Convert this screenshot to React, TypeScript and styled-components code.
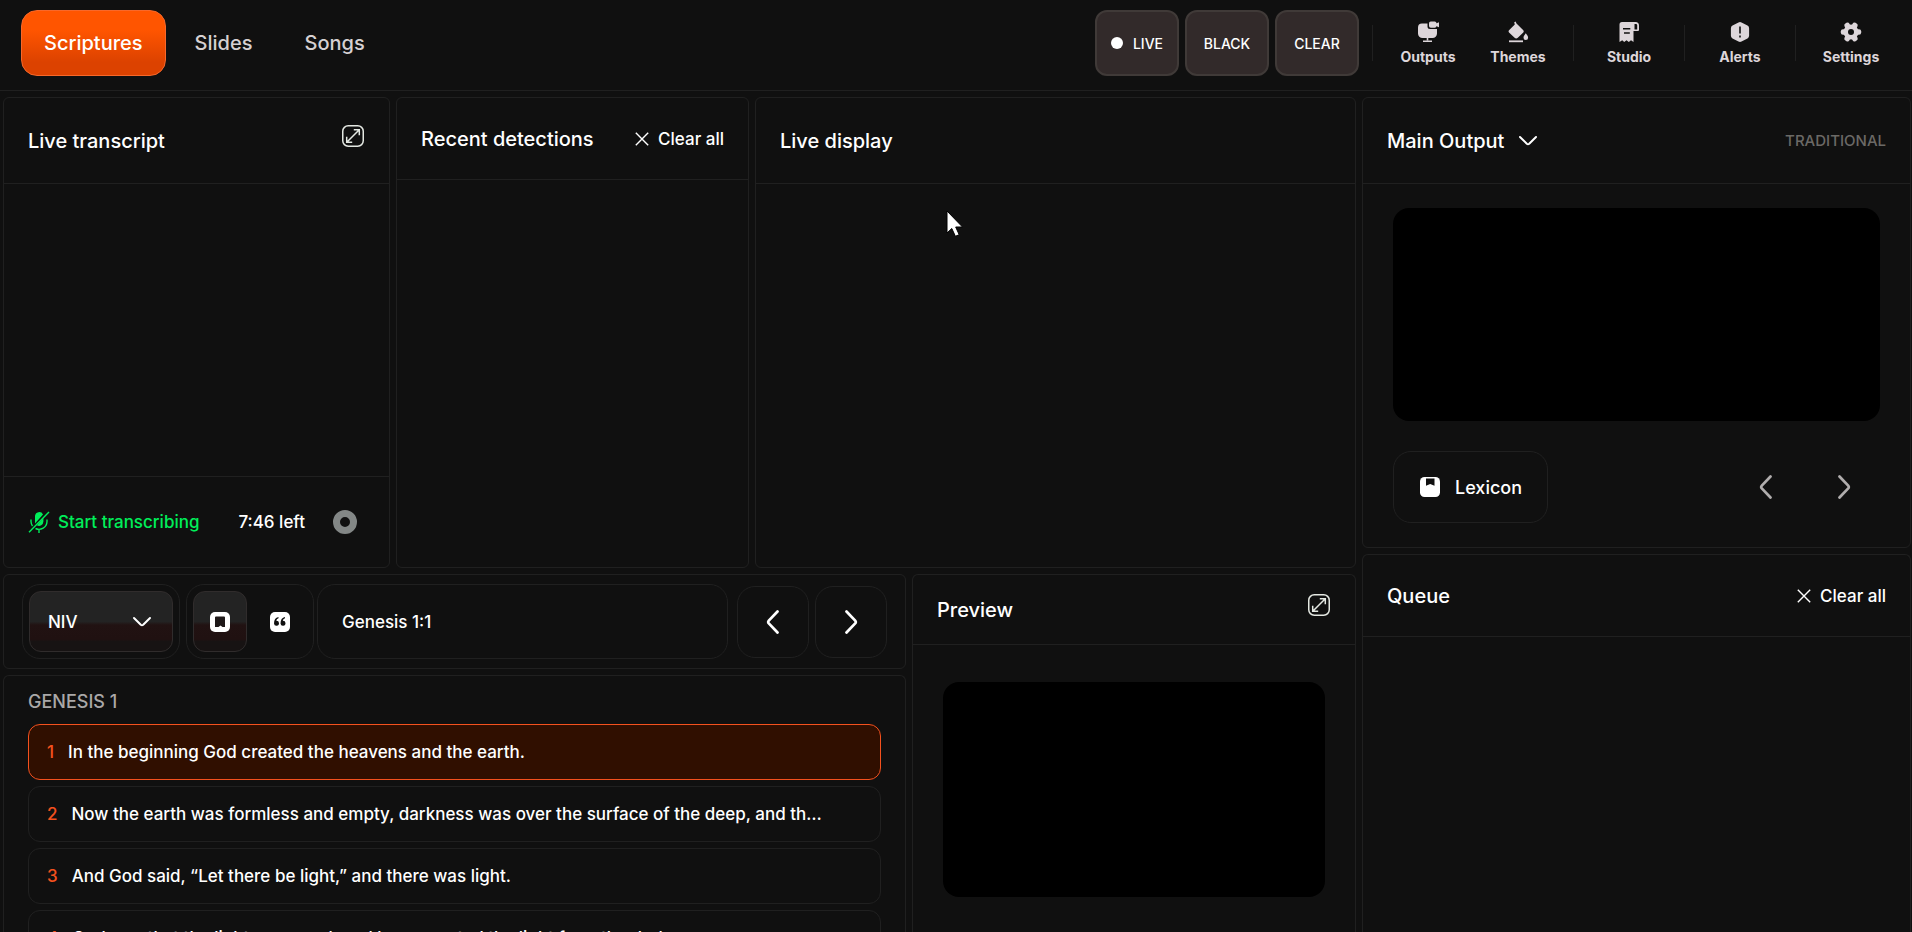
import React from "react";
import styled, { createGlobalStyle, css } from "styled-components";

const line = "#202020";

const GlobalStyle = createGlobalStyle`
  *, *::before, *::after { box-sizing: border-box; }
  body {
    margin: 0;
    background: #101010;
    color: #ffffff;
    font-family: Inter, "Liberation Sans", sans-serif;
    font-size: 17px;
    font-weight: 500;
  }
  button, input, select { font: inherit; color: inherit; }
  button { cursor: pointer; }
  h1, h2, h3, p, ol { margin: 0; padding: 0; }
`;

/* ---------- Shell ---------- */

const Shell = styled.div`
  height: 100vh;
  display: flex;
  flex-direction: column;
  overflow: hidden;
  position: relative;
`;

const TopBar = styled.header`
  flex: none;
  display: flex;
  justify-content: space-between;
  align-items: flex-start;
  height: 91px;
  padding: 10px 16px 0 21px;
  border-bottom: 1px solid ${line};
`;

const Tabs = styled.nav`
  display: flex;
  gap: 6px;
`;

const Tab = styled.button<{ $active?: boolean }>`
  height: 66px;
  padding: 0 22px;
  border: 1px solid transparent;
  border-radius: 16px;
  background: none;
  color: #d6d0d2;
  font-size: 20px;
  ${(p) =>
    p.$active &&
    css`
      color: #ffffff;
      border-color: #f8682a;
      background: linear-gradient(#ff5500 30%, #dc4200 80%);
    `}
`;

const Tools = styled.div`
  display: flex;
  align-items: center;
`;

const StateButtons = styled.div`
  display: flex;
  gap: 6px;
  margin-right: 13px;
`;

const StateButton = styled.button`
  display: flex;
  align-items: center;
  justify-content: center;
  gap: 10px;
  width: 84px;
  height: 66px;
  padding: 0;
  border: 2px solid #403a38;
  border-radius: 12px;
  background: #322a2a;
  font-size: 14px;
`;

const Dot = styled.span`
  width: 12px;
  height: 12px;
  border-radius: 50%;
  background: #ffffff;
`;

const ToolGroup = styled.div`
  display: flex;
  align-items: center;
  padding-right: 10px;
  &:last-child { padding-right: 0; }
  &::before {
    content: "";
    width: 1px;
    height: 36px;
    margin-right: 10px;
    background: ${line};
  }
`;

const ToolButton = styled.button`
  display: flex;
  flex-direction: column;
  align-items: center;
  gap: 4px;
  width: 90px;
  padding: 2px 0 0;
  border: 0;
  background: none;
  color: #ddd6da;
  font-size: 14px;
  font-weight: 700;
  line-height: 20px;
`;

/* ---------- Panels ---------- */

const Workspace = styled.main`
  flex: 1;
  min-height: 0;
  display: grid;
  grid-template-columns: minmax(0, 1353fr) minmax(0, 549fr);
  gap: 6px;
  padding: 6px 1px 0 3px;
`;

const LeftArea = styled.div`
  min-height: 0;
  display: grid;
  grid-template-rows: minmax(0, 471fr) minmax(0, 358fr);
  gap: 6px;
`;

const LiveRow = styled.div`
  min-height: 0;
  display: grid;
  grid-template-columns: minmax(0, 387fr) minmax(0, 353fr) minmax(0, 601fr);
  gap: 6px;
`;

const LowerRow = styled.div`
  min-height: 0;
  display: grid;
  grid-template-columns: minmax(0, 903fr) minmax(0, 444fr);
  gap: 6px;
`;

const Column = styled.div`
  min-height: 0;
  display: flex;
  flex-direction: column;
  gap: 6px;
`;

const Panel = styled.section<{ $fill?: boolean; $open?: boolean }>`
  display: flex;
  flex-direction: column;
  flex: ${(p) => (p.$fill ? "1" : "none")};
  min-height: 0;
  border: 1px solid ${line};
  border-radius: 6px;
  overflow: hidden;
  ${(p) =>
    p.$open &&
    css`
      border-bottom: 0;
      border-bottom-left-radius: 0;
      border-bottom-right-radius: 0;
    `}
`;

const headHeights = { tall: 86, medium: 82, short: 70 };

const PanelHead = styled.header<{ $size: keyof typeof headHeights }>`
  flex: none;
  display: flex;
  align-items: center;
  justify-content: space-between;
  height: ${(p) => headHeights[p.$size]}px;
  padding: 0 24px;
  border-bottom: 1px solid ${line};
`;

const Title = styled.h2`
  font-size: 20px;
  font-weight: 500;
  line-height: 24px;
`;

const PlainButton = styled.button`
  display: flex;
  align-items: center;
  gap: 8px;
  padding: 0;
  border: 0;
  background: none;
`;

const ExpandButton = styled(PlainButton)`
  padding: 0 0 10px;
`;

const OutputPicker = styled(PlainButton)`
  gap: 14px;
  font-size: 20px;
`;

const ModeLabel = styled.span`
  color: #6b6966;
  font-size: 15px;
`;

/* ---------- Transcript ---------- */

const PanelSpace = styled.div`
  flex: 1;
`;

const TranscriptFoot = styled.footer`
  display: flex;
  align-items: center;
  height: 91px;
  padding: 0 24px;
  border-top: 1px solid ${line};
`;

const StartButton = styled(PlainButton)`
  color: #00ee5a;
`;

const TimeLeft = styled.span`
  margin: 0 28px 0 auto;
`;

const StopButton = styled.button`
  width: 24px;
  height: 24px;
  margin-right: 8px;
  padding: 0;
  border: 7px solid #838786;
  border-radius: 50%;
  background: #101010;
`;

/* ---------- Output and preview ---------- */

const Screen = styled.div<{ $wide?: boolean }>`
  background: #000000;
  border-radius: 16px;
  ${(p) => (p.$wide ? "height: 213px;" : "aspect-ratio: 16 / 9;")}
`;

const OutputBody = styled.div`
  display: flex;
  flex-direction: column;
  gap: 30px;
  padding: 24px 30px;
`;

const PreviewBody = styled.div`
  padding: 37px 30px 0;
`;

const OutputControls = styled.div`
  display: flex;
  align-items: center;
  gap: 6px;
`;

const LexiconButton = styled.button`
  display: flex;
  align-items: center;
  gap: 14px;
  height: 72px;
  margin-right: auto;
  padding: 0 25px;
  border: 1px solid ${line};
  border-radius: 18px;
  background: none;
  font-size: 18px;
`;

const StepButton = styled.button<{ $outlined?: boolean }>`
  flex: none;
  display: flex;
  align-items: center;
  justify-content: center;
  width: 72px;
  height: 72px;
  padding: 0;
  border: 1px solid ${(p) => (p.$outlined ? line : "transparent")};
  border-radius: 18px;
  background: none;
  color: ${(p) => (p.$outlined ? "#ffffff" : "#b0adad")};
`;

/* ---------- Scripture toolbar ---------- */

const ScriptureBar = styled.div`
  display: flex;
  align-items: center;
  height: 93px;
  padding: 0 18px;
`;

const raised = css`
  border: 1px solid #302c2c;
  border-radius: 12px;
  background: linear-gradient(#232323 50%, #211212 56%, #201111 80%, #171313 84%);
`;

const Well = styled.div`
  flex: none;
  display: flex;
  gap: 6px;
  height: 75px;
  margin-right: 6px;
  padding: 6px;
  border: 1px solid ${line};
  border-radius: 18px;
`;

const ToggleWell = styled(Well)`
  margin-right: 3px;
`;

const VersionField = styled.label`
  position: relative;
  display: flex;
  align-items: center;
  width: 144px;
  ${raised}
  svg {
    position: absolute;
    right: 20px;
    pointer-events: none;
  }
`;

const VersionSelect = styled.select`
  appearance: none;
  width: 100%;
  height: 100%;
  padding: 0 48px 0 18px;
  border: 0;
  outline: 0;
  background: none;
`;

const ViewButton = styled.button<{ $active?: boolean }>`
  display: flex;
  align-items: center;
  justify-content: center;
  width: 54px;
  padding: 0;
  border: 1px solid transparent;
  background: none;
  ${(p) => p.$active && raised}
`;

const ReferenceInput = styled.input`
  flex: 1;
  min-width: 0;
  height: 75px;
  margin-right: 9px;
  padding: 0 24px;
  border: 1px solid ${line};
  border-radius: 18px;
  outline: 0;
  background: none;
`;

const StepPair = styled.div`
  display: flex;
  gap: 6px;
`;

/* ---------- Verses ---------- */

const Chapter = styled.h3`
  padding: 14px 24px 10px;
  color: #aaa8a8;
  font-size: 18px;
  font-weight: 500;
  line-height: 24px;
`;

const VerseList = styled.ol`
  display: flex;
  flex-direction: column;
  gap: 6px;
  padding: 0 24px;
  list-style: none;
`;

const Verse = styled.button<{ $active?: boolean }>`
  display: flex;
  align-items: center;
  gap: 14px;
  width: 100%;
  height: 56px;
  padding: 0 54px 0 18px;
  border: 1px solid ${(p) => (p.$active ? "#f4511e" : line)};
  border-radius: 12px;
  background: ${(p) => (p.$active ? "#300f00" : "none")};
  text-align: left;
`;

const VerseNumber = styled.span`
  color: #f4511e;
`;

const VerseText = styled.span`
  min-width: 0;
  overflow: hidden;
  text-overflow: ellipsis;
  white-space: nowrap;
  line-height: 22px;
`;

const Pointer = styled.svg`
  position: absolute;
  left: 946px;
  top: 210px;
  pointer-events: none;
`;

/* ---------- Icons ---------- */

const OutputsIcon = () => (
  <svg width="22" height="22" viewBox="0 0 22 22" fill="currentColor" aria-hidden="true">
    <path d="M5 2.500h5.500v3A2.500 2.500 0 0 0 13 8h7v4.500A4.500 4.500 0 0 1 15.500 17H5.500A4.500 4.500 0 0 1 1 12.500V6.500a4 4 0 0 1 4-4z" />
    <rect x="12" y="0.500" width="7.500" height="6.200" rx="1.800" />
    <path d="M19 2.500L22 1.200v5L19 5z" />
    <path d="M9.700 17h1.600v2.600H9.700z" />
    <path d="M6 19.500h9V21H6z" />
  </svg>
);

const ThemesIcon = () => (
  <svg width="22" height="22" viewBox="0 0 22 22" fill="currentColor" aria-hidden="true">
    <path d="M7.200 1.200L8.600 0.600L9.500 2.500L16.300 9.300a1.500 1.500 0 0 1 0 2.100L10.800 16.700a2.300 2.300 0 0 1-3.200 0L2 11.400a1.600 1.600 0 0 1 0-2.200L7.800 3.400z" />
    <path d="M18.800 12.300c1.200 1.600 2.300 3 2.300 4.400a2.300 2.300 0 0 1-4.600 0c0-1.400 1.100-2.800 2.300-4.400z" />
    <path d="M2 19.400h14v1.800H2z" />
  </svg>
);

const StudioIcon = () => (
  <svg width="22" height="22" viewBox="0 0 22 22" aria-hidden="true">
    <path
      fill="currentColor"
      fillRule="evenodd"
      d="M4 1h13.500A3.500 3.500 0 0 1 21 4.500V9a1 1 0 0 1-1 1h-4.500v11l-2.500-1.700L10.800 21 8.500 19.300 6.200 21 4.200 19.300 1.500 21V3.500A2.500 2.500 0 0 1 4 1zM16.500 3v5.500h2.700V4.300A1.300 1.300 0 0 0 17.900 3zM5 7v1.600h7.300V7zm1 4.200v1.600h5.800v-1.600z"
    />
  </svg>
);

const AlertsIcon = () => (
  <svg width="22" height="22" viewBox="0 0 22 22" aria-hidden="true">
    <path
      fill="currentColor"
      d="M9.500 1.400a3 3 0 0 1 3 0l6 3.200a3 3 0 0 1 1.600 2.600v7.600a3 3 0 0 1-1.600 2.600l-6 3.200a3 3 0 0 1-3 0l-6-3.200A3 3 0 0 1 1.900 14.800V7.200a3 3 0 0 1 1.600-2.600z"
    />
    <path d="M11 5.500v7M11 14.500v2" stroke="#101010" strokeWidth="1.600" />
  </svg>
);

const SettingsIcon = () => (
  <svg width="22" height="22" viewBox="0 0 22 22" aria-hidden="true">
    <g fill="currentColor">
      <circle cx="11" cy="11" r="7.500" />
      {[30, 90, 150].map((a) => (
        <rect key={a} x="8.200" y="0.800" width="5.600" height="20.400" rx="2.200" transform={`rotate(${a} 11 11)`} />
      ))}
    </g>
    <circle cx="11" cy="11" r="3" fill="#101010" />
  </svg>
);

const ExpandIcon = () => (
  <svg width="24" height="24" viewBox="0 0 24 24" fill="none" stroke="#e4e8e2" strokeWidth="1.500" aria-hidden="true">
    <rect x="1.750" y="1.750" width="20.500" height="20.500" rx="5.500" />
    <path d="M6 18L18 6M12.800 5.700h5.500v5.500M5.700 12.800v5.500h5.500" />
  </svg>
);

const CloseIcon = () => (
  <svg width="16" height="16" viewBox="0 0 16 16" stroke="currentColor" strokeWidth="1.400" aria-hidden="true">
    <path d="M1.800 1.800l12.400 12.400M14.200 1.800L1.800 14.200" />
  </svg>
);

const ChevronDown = () => (
  <svg width="20" height="12" viewBox="0 0 20 12" fill="none" stroke="currentColor" strokeWidth="2" strokeLinecap="round" strokeLinejoin="round" aria-hidden="true">
    <path d="M2 2l6.800 6.700q1.200 1 2.400 0L18 2" />
  </svg>
);

const ChevronSide = ({ right }: { right?: boolean }) => (
  <svg width="14" height="26" viewBox="0 0 14 26" fill="none" stroke="currentColor" strokeWidth="2.700" strokeLinecap="round" aria-hidden="true">
    <path d={right ? "M2.500 2.500l8.700 9.100q1.200 1.400 0 2.800l-8.700 9.100" : "M11.500 2.500l-8.700 9.100q-1.200 1.400 0 2.800l8.700 9.100"} />
  </svg>
);

const MicOffIcon = () => (
  <svg width="22" height="22" viewBox="0 0 22 22" fill="none" stroke="currentColor" strokeWidth="1.400" aria-hidden="true">
    <path fill="currentColor" stroke="none" d="M7 5a4.200 4.200 0 0 1 8-1.500L7 12.500zM15.400 7v3.500a4.400 4.400 0 0 1-6.500 3.800z" />
    <path d="M3 8.500v2a8 8 0 0 0 1.500 4.500M19 8.500v2a8 8 0 0 1-11.500 7M11 18.500V22" />
    <path d="M1 21.300L21 1" />
  </svg>
);

const LexiconIcon = () => (
  <svg width="22" height="22" viewBox="0 0 22 22" aria-hidden="true">
    <rect x="1" y="1" width="20" height="20" rx="4.500" fill="#ffffff" />
    <path d="M7 2.500h8.500v7.200L11.200 8 7 9.700z" fill="#101010" />
  </svg>
);

const VerseViewIcon = () => (
  <svg width="22" height="22" viewBox="0 0 22 22" aria-hidden="true">
    <rect x="1" y="1" width="20" height="20" rx="5" fill="#ffffff" />
    <path d="M7 5.500h8a1 1 0 0 1 1 1V16h-2.500l-2-1.500L9.500 16H6V6.500a1 1 0 0 1 1-1z" fill="#1e1818" />
  </svg>
);

const QuoteIcon = () => (
  <svg width="22" height="22" viewBox="0 0 22 22" aria-hidden="true">
    <rect x="1" y="1" width="20" height="20" rx="5" fill="#ffffff" />
    <g fill="#101010">
      <path d="M9.500 6C6.500 6.600 5 8.600 5 12.500a2.500 2.500 0 1 0 2.300-2.700c.2-1.200.9-2 2.200-2.500z" />
      <path d="M16 6c-3 .6-4.500 2.600-4.500 6.500a2.500 2.500 0 1 0 2.300-2.700c.2-1.200.9-2 2.200-2.500z" />
    </g>
  </svg>
);

/* ---------- Data ---------- */

const toolGroups = [
  [
    { label: "Outputs", Icon: OutputsIcon },
    { label: "Themes", Icon: ThemesIcon },
  ],
  [{ label: "Studio", Icon: StudioIcon }],
  [{ label: "Alerts", Icon: AlertsIcon }],
  [{ label: "Settings", Icon: SettingsIcon }],
];

const verses = [
  "In the beginning God created the heavens and the earth.",
  "Now the earth was formless and empty, darkness was over the surface of the deep, and the Spirit of God was hovering over the waters.",
  "And God said, “Let there be light,” and there was light.",
  "God saw that the light was good, and he separated the light from the darkness.",
];

const ClearAll = () => (
  <PlainButton type="button">
    <CloseIcon />
    Clear all
  </PlainButton>
);

export default function App() {
  return (
    <Shell>
      <GlobalStyle />
      <TopBar>
        <Tabs>
          <Tab type="button" $active>Scriptures</Tab>
          <Tab type="button">Slides</Tab>
          <Tab type="button">Songs</Tab>
        </Tabs>
        <Tools>
          <StateButtons>
            <StateButton type="button"><Dot />LIVE</StateButton>
            <StateButton type="button">BLACK</StateButton>
            <StateButton type="button">CLEAR</StateButton>
          </StateButtons>
          {toolGroups.map((group) => (
            <ToolGroup key={group[0].label}>
              {group.map(({ label, Icon }) => (
                <ToolButton type="button" key={label}>
                  <Icon />
                  {label}
                </ToolButton>
              ))}
            </ToolGroup>
          ))}
        </Tools>
      </TopBar>

      <Workspace>
        <LeftArea>
          <LiveRow>
            <Panel>
              <PanelHead $size="tall">
                <Title>Live transcript</Title>
                <ExpandButton type="button" aria-label="Expand transcript"><ExpandIcon /></ExpandButton>
              </PanelHead>
              <PanelSpace />
              <TranscriptFoot>
                <StartButton type="button"><MicOffIcon />Start transcribing</StartButton>
                <TimeLeft>7:46 left</TimeLeft>
                <StopButton type="button" aria-label="Stop" />
              </TranscriptFoot>
            </Panel>
            <Panel>
              <PanelHead $size="medium">
                <Title>Recent detections</Title>
                <ClearAll />
              </PanelHead>
            </Panel>
            <Panel>
              <PanelHead $size="tall">
                <Title>Live display</Title>
              </PanelHead>
            </Panel>
          </LiveRow>

          <LowerRow>
            <Column>
              <Panel>
                <ScriptureBar>
                  <Well>
                    <VersionField>
                      <VersionSelect aria-label="Bible version" defaultValue="NIV">
                        <option>NIV</option>
                      </VersionSelect>
                      <ChevronDown />
                    </VersionField>
                  </Well>
                  <ToggleWell>
                    <ViewButton type="button" $active aria-label="Reference view"><VerseViewIcon /></ViewButton>
                    <ViewButton type="button" aria-label="Quote search"><QuoteIcon /></ViewButton>
                  </ToggleWell>
                  <ReferenceInput aria-label="Reference" defaultValue="Genesis 1:1" />
                  <StepPair>
                    <StepButton type="button" $outlined aria-label="Previous verse"><ChevronSide /></StepButton>
                    <StepButton type="button" $outlined aria-label="Next verse"><ChevronSide right /></StepButton>
                  </StepPair>
                </ScriptureBar>
              </Panel>
              <Panel $fill $open>
                <Chapter>GENESIS 1</Chapter>
                <VerseList>
                  {verses.map((text, i) => (
                    <li key={text}>
                      <Verse type="button" $active={i === 0}>
                        <VerseNumber>{i + 1}</VerseNumber>
                        <VerseText>{text}</VerseText>
                      </Verse>
                    </li>
                  ))}
                </VerseList>
              </Panel>
            </Column>
            <Panel $open>
              <PanelHead $size="short">
                <Title>Preview</Title>
                <ExpandButton type="button" aria-label="Expand preview"><ExpandIcon /></ExpandButton>
              </PanelHead>
              <PreviewBody>
                <Screen />
              </PreviewBody>
            </Panel>
          </LowerRow>
        </LeftArea>

        <Column>
          <Panel>
            <PanelHead $size="tall">
              <OutputPicker type="button">Main Output<ChevronDown /></OutputPicker>
              <ModeLabel>TRADITIONAL</ModeLabel>
            </PanelHead>
            <OutputBody>
              <Screen $wide />
              <OutputControls>
                <LexiconButton type="button"><LexiconIcon />Lexicon</LexiconButton>
                <StepButton type="button" aria-label="Previous"><ChevronSide /></StepButton>
                <StepButton type="button" aria-label="Next"><ChevronSide right /></StepButton>
              </OutputControls>
            </OutputBody>
          </Panel>
          <Panel $fill $open>
            <PanelHead $size="medium">
              <Title>Queue</Title>
              <ClearAll />
            </PanelHead>
          </Panel>
        </Column>
      </Workspace>

      <Pointer width="20" height="28" viewBox="0 0 20 28" aria-hidden="true">
        <path d="M1 1v22l4.800-4.500 3.600 7.800 3.800-1.600-3.500-7.700h6.800z" fill="#ffffff" stroke="#000000" />
      </Pointer>
    </Shell>
  );
}
